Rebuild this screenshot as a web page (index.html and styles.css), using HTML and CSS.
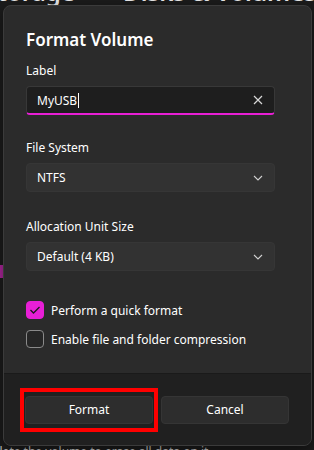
FILE: index.html
```html
<!DOCTYPE html>
<html lang="en">
<head>
    <meta charset="UTF-8">
    <meta name="viewport" content="width=device-width, initial-scale=1.0">
    <title>Format Volume</title>
    <link rel="stylesheet" href="styles.css">
</head>
<body>
    <div class="page">
        <div class="crumbs"><span>Storage</span><span class="sep">›</span><span>Disks &amp; Volumes</span></div>
        <div class="nav-mark"></div>
        <p class="hint">Delete the volume to erase all data on it.</p>
    </div>

    <div class="dialog">
        <div class="dialog-body">
            <h2>Format Volume</h2>

            <label class="field-label">Label</label>
            <div class="textbox">
                <span class="value">MyUSB</span><span class="caret"></span>
                <svg class="icon" width="10" height="10" viewBox="0 0 10 10">
                    <path d="M1 1 L9 9 M9 1 L1 9" stroke="#d8d8d8" stroke-width="1.2" fill="none"/>
                </svg>
            </div>

            <label class="field-label">File System</label>
            <div class="dropdown">
                <span>NTFS</span>
                <svg class="icon" width="10" height="6" viewBox="0 0 10 6">
                    <path d="M1 1 L5 5 L9 1" stroke="#cfcfcf" stroke-width="1.1" fill="none"/>
                </svg>
            </div>

            <label class="field-label">Allocation Unit Size</label>
            <div class="dropdown">
                <span>Default (4 KB)</span>
                <svg class="icon" width="10" height="6" viewBox="0 0 10 6">
                    <path d="M1 1 L5 5 L9 1" stroke="#cfcfcf" stroke-width="1.1" fill="none"/>
                </svg>
            </div>

            <div class="checks">
                <div class="check">
                    <span class="box checked">
                        <svg width="12" height="10" viewBox="0 0 12 10">
                            <path d="M1.5 5 L4.5 8 L10.5 2" stroke="#1a1a1a" stroke-width="1.3" fill="none"/>
                        </svg>
                    </span>
                    <span>Perform a quick format</span>
                </div>
                <div class="check">
                    <span class="box"></span>
                    <span>Enable file and folder compression</span>
                </div>
            </div>
        </div>

        <div class="dialog-footer">
            <div class="highlight">
                <button class="btn">Format</button>
            </div>
            <button class="btn">Cancel</button>
        </div>
    </div>
</body>
</html>
```

FILE: styles.css
```css
html, body {
    margin: 0;
    padding: 0;
}
body {
    width: 314px;
    height: 450px;
    overflow: hidden;
    position: relative;
    background-color: #1c1c1c;
    font-family: "Segoe UI", "Noto Sans", sans-serif;
    color: #ffffff;
}
.page {
    height: 450px;
    display: flex;
    flex-direction: column;
}
.crumbs {
    display: flex;
    gap: 20px;
    margin: -24px 0 0 -16px;
    font-size: 24px;
    font-weight: 600;
    line-height: 32px;
    color: #f0f0f0;
    white-space: nowrap;
}
.crumbs .sep {
    color: #9a9a9a;
}
.nav-mark {
    width: 3px;
    height: 13px;
    margin-top: 257px;
    background-color: #b0279e;
}
.hint {
    margin: auto 0 0 -16px;
    font-size: 12px;
    line-height: 14px;
    height: 5px;
    color: #c8c8c8;
    white-space: nowrap;
}
.dialog {
    position: absolute;
    left: 3px;
    top: 5px;
    width: 307px;
    height: 439px;
    border: 1px solid #3b3b3b;
    border-radius: 8px;
    overflow: hidden;
    display: flex;
    flex-direction: column;
    background-color: #2b2b2b;
    box-shadow: 0 4px 16px rgba(0,0,0,0.5);
}
.dialog-body {
    flex: 1;
    padding: 20px 36px 0 22px;
}
h2 {
    margin: 0 0 7px;
    font-size: 17px;
    font-weight: 600;
    line-height: 28px;
}
.field-label {
    display: block;
    font-size: 12px;
    line-height: 20px;
    margin-bottom: 5px;
}
.textbox, .dropdown {
    box-sizing: border-box;
    height: 29px;
    display: flex;
    align-items: center;
    padding: 0 11px 0 10px;
    border-radius: 4px;
    font-size: 12px;
}
.textbox {
    background-color: #1e1e1e;
    border: 1px solid #383838;
    border-bottom: 2px solid #e81fd6;
    margin-bottom: 23px;
}
.textbox .caret {
    width: 1px;
    height: 15px;
    margin-left: 1px;
    background-color: #ffffff;
}
.dropdown {
    background-color: #323232;
    border: 1px solid #363636;
    margin-bottom: 25px;
}
.icon {
    margin-left: auto;
}
.checks {
    margin-top: 30px;
    display: flex;
    flex-direction: column;
    gap: 11px;
}
.check {
    display: flex;
    align-items: center;
    gap: 7px;
    height: 18px;
    font-size: 12px;
}
.box {
    box-sizing: border-box;
    width: 18px;
    height: 18px;
    border-radius: 4px;
    border: 1px solid #8a8a8a;
    background-color: #262626;
    display: flex;
    align-items: center;
    justify-content: center;
}
.box.checked {
    background-color: #e81fd6;
    border-color: #e81fd6;
}
.dialog-footer {
    height: 72px;
    box-sizing: border-box;
    background-color: #202020;
    border-top: 1px solid #1a1a1a;
    display: flex;
    align-items: center;
    gap: 3px;
    padding: 0 0 0 16px;
}
.highlight {
    border: 4px solid #ff0000;
    padding: 4px 1px;
}
.btn {
    width: 128px;
    height: 28px;
    border: 1px solid #353535;
    border-radius: 4px;
    background-color: #2d2d2d;
    color: #ffffff;
    font-family: inherit;
    font-size: 12px;
    display: block;
}
```
